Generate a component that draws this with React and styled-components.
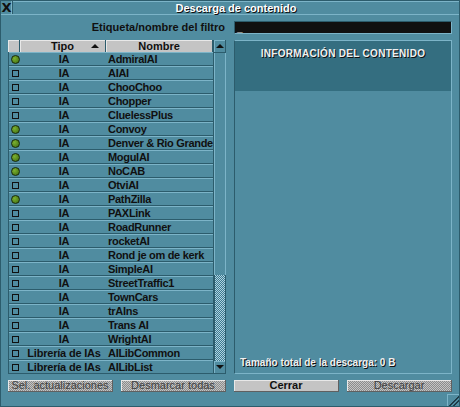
import React from 'react';
import styled, {createGlobalStyle, css} from 'styled-components';

const GlobalStyle = createGlobalStyle`
  html, body {
    margin: 0;
    padding: 0;
    background: #508ca0;
  }
  body {
    font-family: "Liberation Sans", Arial, sans-serif;
    font-weight: bold;
    font-size: 11px;
  }
`;

const colors = {
  base: '#508ca0',
  dark: '#346e80',
  light: '#7cb4c8',
  line: '#2c5c6c',
  text: '#101010',
  grey: '#c4c4c4'
};

const checker = (a, b, size = 2) => css`
  background-color: ${a};
  background-image: repeating-conic-gradient(${a} 0 25%, ${b} 0 50%);
  background-size: ${size}px ${size}px;
`;

const Window = styled.div`
  position: relative;
  width: 460px;
  height: 407px;
  box-sizing: border-box;
  background: ${colors.base};
  border: 1px solid ${colors.line};
  display: flex;
  flex-direction: column;
  overflow: hidden;
`;

const TitleBar = styled.div`
  display: flex;
  height: 13px;
  border-bottom: 1px solid ${colors.light};
`;

const CloseBox = styled.div`
  width: 11px;
  border-right: 1px solid ${colors.line};
  box-shadow: inset -1px 0 0 ${colors.light};
  color: #101010;
  font-size: 13px;
  line-height: 13px;
  text-align: center;
  font-family: "DejaVu Sans", sans-serif;
  font-weight: bold;
`;

const Title = styled.div`
  flex: 1;
  text-align: center;
  color: #fff;
  font-size: 11px;
  line-height: 13px;
  text-shadow: 1px 1px 0 #101010;
  border-top: 1px solid ${colors.light};
  box-sizing: border-box;
`;

const FilterRow = styled.div`
  display: grid;
  grid-template-columns: 218px 218px;
  gap: 8px;
  padding: 0 7px;
  margin-top: 6px;
  height: 13px;
`;

const FilterLabel = styled.div`
  text-align: right;
  color: ${colors.text};
  font-size: 11px;
  line-height: 13px;
  padding-right: 1px;
`;

const EditBox = styled.div`
  background: #101010;
  border: 1px solid ${colors.light};
  border-top-color: ${colors.line};
  border-left-color: ${colors.line};
  color: #fff;
  font-size: 10px;
  line-height: 11px;
  padding-left: 2px;
`;

const Main = styled.div`
  display: grid;
  grid-template-columns: 218px 218px;
  gap: 8px;
  padding: 0 7px;
  margin-top: 6px;
  height: 334px;
`;

const ListArea = styled.div`
  display: grid;
  grid-template-columns: 205px 13px;
`;

const List = styled.div`
  display: flex;
  flex-direction: column;
`;

const HeaderRow = styled.div`
  display: grid;
  grid-template-columns: 12px 86px 107px;
  height: 12px;
`;

const HeaderCell = styled.div`
  background: ${colors.grey};
  border-right: 1px solid ${colors.line};
  box-shadow: inset 1px 1px 0 #e8e8e8;
  color: ${colors.text};
  font-size: 11px;
  line-height: 12px;
  text-align: center;
  position: relative;
`;

const SortArrow = styled.span`
  position: absolute;
  right: 6px;
  top: 4px;
  width: 0;
  height: 0;
  border-left: 4px solid transparent;
  border-right: 4px solid transparent;
  border-bottom: 4px solid #101010;
`;

const Row = styled.div`
  display: grid;
  grid-template-columns: 12px 86px 107px;
  height: 14px;
  box-sizing: border-box;
  border-bottom: 1px solid ${colors.line};
  border-left: 1px solid ${colors.line};
  box-shadow: inset 0 1px 0 ${colors.light};
  color: ${colors.text};
  font-size: 11px;
  line-height: 14px;
`;

const Mark = styled.div`
  display: flex;
  align-items: center;
  justify-content: center;
`;

const Dot = styled.span`
  width: 7px;
  height: 7px;
  border-radius: 50%;
  background: radial-gradient(circle at 35% 35%, #7cb030, #3c6c10);
  border: 1px solid #182808;
`;

const Box = styled.span`
  width: 5px;
  height: 5px;
  border: 1px solid #101010;
`;

const TypeCell = styled.div`
  text-align: center;
  white-space: nowrap;
  letter-spacing: -0.2px;
`;

const NameCell = styled.div`
  padding-left: 1px;
  white-space: nowrap;
  letter-spacing: -0.3px;
`;

const Scrollbar = styled.div`
  display: flex;
  flex-direction: column;
  background: ${colors.base};
  border-left: 1px solid ${colors.line};
  box-shadow: inset 1px 0 0 ${colors.light}, inset -1px 0 0 ${colors.light};
`;

const ScrollBtn = styled.div`
  height: 12px;
  background: ${colors.base};
  border-right: 1px solid ${colors.line};
  border-bottom: 1px solid ${colors.line};
  box-shadow: inset 1px 1px 0 ${colors.light};
  display: flex;
  align-items: center;
  justify-content: center;
  &::after {
    content: '';
    border-left: 4px solid transparent;
    border-right: 4px solid transparent;
    ${p => p.down
      ? css`border-top: 4px solid #101010;`
      : css`border-bottom: 4px solid #101010;`}
  }
`;

const Track = styled.div`
  flex: 1;
  display: flex;
  flex-direction: column;
`;

const Thumb = styled.div`
  margin-top: auto;
  height: 86px;
  border-left: 1px solid ${colors.line};
  border-right: 1px solid ${colors.line};
  ${checker('#3c7890', '#b0d4e0', 2)}
`;

const InfoPanel = styled.div`
  display: flex;
  flex-direction: column;
  border: 1px solid ${colors.line};
  border-top-color: ${colors.light};
  border-right-color: ${colors.light};
  border-bottom-color: ${colors.light};
`;

const InfoHead = styled.div`
  height: 50px;
  background: ${colors.dark};
  color: #f0f0f0;
  text-shadow: 1px 1px 0 #101010;
  font-size: 10px;
  letter-spacing: 0.3px;
  text-align: center;
  padding-top: 7px;
  box-sizing: border-box;
`;

const InfoBody = styled.div`
  flex: 1;
  display: flex;
  align-items: flex-end;
  padding: 0 0 5px 5px;
  color: #f0f0f0;
  text-shadow: 1px 1px 0 #101010;
  font-size: 10px;
`;

const ButtonRow = styled.div`
  display: grid;
  grid-template-columns: 105px 105px 105px 105px;
  column-gap: 8px;
  padding: 0 7px;
  margin-top: 6px;
`;

const Button = styled.div`
  height: 12px;
  box-sizing: border-box;
  border-right: 1px solid #606060;
  border-bottom: 1px solid #606060;
  box-shadow: inset 1px 1px 0 #e8e8e8;
  font-size: 11px;
  line-height: 11px;
  text-align: center;
  color: ${colors.text};
  background: ${colors.grey};
  ${p => p.disabled && css`
    ${checker('#c4c4c4', '#8c8c8c', 2)}
    color: #404040;
    font-weight: normal;
  `}
`;

const Resize = styled.div`
  position: absolute;
  right: 0;
  bottom: 0;
  width: 11px;
  height: 11px;
  border-left: 1px solid ${colors.light};
  border-top: 1px solid ${colors.light};
  background: linear-gradient(135deg, transparent 50%, #203c48 50%, #203c48 60%, transparent 60%, transparent 70%, #203c48 70%, #203c48 80%, transparent 80%);
`;

const items = [
  ['IA', 'AdmiralAI', true],
  ['IA', 'AIAI', false],
  ['IA', 'ChooChoo', false],
  ['IA', 'Chopper', false],
  ['IA', 'CluelessPlus', false],
  ['IA', 'Convoy', true],
  ['IA', 'Denver & Rio Grande', true],
  ['IA', 'MogulAI', true],
  ['IA', 'NoCAB', true],
  ['IA', 'OtviAI', false],
  ['IA', 'PathZilla', true],
  ['IA', 'PAXLink', false],
  ['IA', 'RoadRunner', false],
  ['IA', 'rocketAI', false],
  ['IA', 'Rond je om de kerk', false],
  ['IA', 'SimpleAI', false],
  ['IA', 'StreetTraffic1', false],
  ['IA', 'TownCars', false],
  ['IA', 'trAIns', false],
  ['IA', 'Trans AI', false],
  ['IA', 'WrightAI', false],
  ['Librería de IAs', 'AILibCommon', false],
  ['Librería de IAs', 'AILibList', false]
];

export default function App() {
  return (
    <>
      <GlobalStyle/>
      <Window>
        <TitleBar>
          <CloseBox>X</CloseBox>
          <Title>Descarga de contenido</Title>
        </TitleBar>

        <FilterRow>
          <FilterLabel>Etiqueta/nombre del filtro</FilterLabel>
          <EditBox>_</EditBox>
        </FilterRow>

        <Main>
          <ListArea>
            <List>
              <HeaderRow>
                <HeaderCell/>
                <HeaderCell>Tipo<SortArrow/></HeaderCell>
                <HeaderCell>Nombre</HeaderCell>
              </HeaderRow>
              {items.map(([type, name, installed]) => (
                <Row key={name}>
                  <Mark>{installed ? <Dot/> : <Box/>}</Mark>
                  <TypeCell>{type}</TypeCell>
                  <NameCell>{name}</NameCell>
                </Row>
              ))}
            </List>
            <Scrollbar>
              <ScrollBtn/>
              <Track>
                <Thumb/>
              </Track>
              <ScrollBtn down/>
            </Scrollbar>
          </ListArea>

          <InfoPanel>
            <InfoHead>INFORMACIÓN DEL CONTENIDO</InfoHead>
            <InfoBody>Tamaño total de la descarga: 0 B</InfoBody>
          </InfoPanel>
        </Main>

        <ButtonRow>
          <Button disabled>Sel. actualizaciones</Button>
          <Button disabled>Desmarcar todas</Button>
          <Button>Cerrar</Button>
          <Button disabled>Descargar</Button>
        </ButtonRow>

        <Resize/>
      </Window>
    </>
  );
}
